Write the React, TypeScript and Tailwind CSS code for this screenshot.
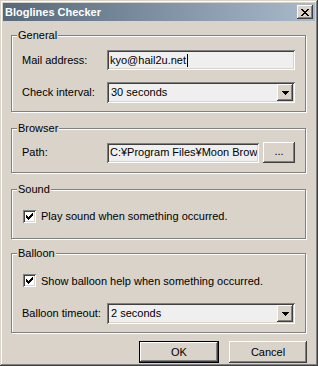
import React from 'react';

const SUNKEN =
  'shadow-[inset_1px_1px_0_#808080,inset_-1px_-1px_0_#ffffff,inset_2px_2px_0_#404040,inset_-2px_-2px_0_#d9d3ca]';
const RAISED =
  'shadow-[inset_-1px_-1px_0_#404040,inset_1px_1px_0_#ffffff,inset_-2px_-2px_0_#808080,inset_2px_2px_0_#d9d3ca]';

function Group({ title, className, children }: { title: string; className: string; children: React.ReactNode }) {
  return (
    <div
      className={`relative w-[295px] border border-[#808080] shadow-[1px_1px_0_#ffffff,inset_1px_1px_0_#ffffff] ${className}`}
    >
      <span className="absolute -top-[8px] left-[5px] bg-[#d9d3ca] px-[1px] leading-[14px]">{title}</span>
      {children}
    </div>
  );
}

function Arrow() {
  return (
    <svg width="7" height="4" viewBox="0 0 7 4" shapeRendering="crispEdges">
      <rect x="0" y="0" width="7" height="1" fill="#000" />
      <rect x="1" y="1" width="5" height="1" fill="#000" />
      <rect x="2" y="2" width="3" height="1" fill="#000" />
      <rect x="3" y="3" width="1" height="1" fill="#000" />
    </svg>
  );
}

function Select({ value }: { value: string }) {
  return (
    <div className={`flex h-[21px] w-[188px] items-stretch bg-[#efefef] p-[2px] ${SUNKEN}`}>
      <span className="flex flex-1 items-center pl-[2px]">{value}</span>
      <span className={`flex w-[16px] items-center justify-center bg-[#d9d3ca] ${RAISED}`}>
        <Arrow />
      </span>
    </div>
  );
}

function Check({ label }: { label: string }) {
  return (
    <div className="flex items-center gap-[5px] pl-[11px]">
      <span className={`flex h-[13px] w-[13px] items-center justify-center bg-white ${SUNKEN}`}>
        <svg width="7" height="7" viewBox="0 0 7 7" shapeRendering="crispEdges">
          <rect x="6" y="0" width="1" height="1" />
          <rect x="5" y="1" width="2" height="1" />
          <rect x="0" y="2" width="1" height="1" />
          <rect x="4" y="2" width="3" height="1" />
          <rect x="0" y="3" width="2" height="1" />
          <rect x="3" y="3" width="3" height="1" />
          <rect x="0" y="4" width="5" height="1" />
          <rect x="1" y="5" width="3" height="1" />
          <rect x="2" y="6" width="1" height="1" />
        </svg>
      </span>
      <span>{label}</span>
    </div>
  );
}

export default function App() {
  return (
    <div className="h-[366px] w-[318px] bg-[#d9d3ca] font-['Liberation_Sans',Arial,sans-serif] text-[11px] text-black shadow-[inset_-1px_-1px_0_#404040,inset_1px_1px_0_#d9d3ca,inset_-2px_-2px_0_#808080,inset_2px_2px_0_#ffffff] pt-[3px]">
      <div className="mx-[3px] flex h-[18px] items-center justify-between bg-gradient-to-r from-[#56697b] to-[#a9bacb] pl-[2px] pr-[2px]">
        <span className="font-bold text-white">Bloglines Checker</span>
        <span className={`flex h-[14px] w-[16px] items-center justify-center bg-[#d9d3ca] ${RAISED}`}>
          <svg width="8" height="7" viewBox="0 0 8 7" shapeRendering="crispEdges">
            <rect x="0" y="0" width="2" height="1" />
            <rect x="6" y="0" width="2" height="1" />
            <rect x="1" y="1" width="2" height="1" />
            <rect x="5" y="1" width="2" height="1" />
            <rect x="2" y="2" width="4" height="1" />
            <rect x="3" y="3" width="2" height="1" />
            <rect x="2" y="4" width="4" height="1" />
            <rect x="1" y="5" width="2" height="1" />
            <rect x="5" y="5" width="2" height="1" />
            <rect x="0" y="6" width="2" height="1" />
            <rect x="6" y="6" width="2" height="1" />
          </svg>
        </span>
      </div>

      <div className="flex flex-col pl-[11px] pt-[14px]">
        <Group title="General" className="pt-[14px] pb-[8px]">
          <div className="flex items-center pl-[10px]">
            <span className="w-[85px]">Mail address:</span>
            <div className={`flex h-[20px] w-[188px] items-center bg-[#efefef] pl-[3px] ${SUNKEN}`}>
              <span>kyo@hail2u.net</span>
              <span className="ml-[1px] h-[13px] w-[1px] bg-black" />
            </div>
          </div>
          <div className="mt-[12px] flex items-center pl-[10px]">
            <span className="w-[85px]">Check interval:</span>
            <Select value="30 seconds" />
          </div>
        </Group>

        <Group title="Browser" className="mt-[16px] pt-[13px] pb-[9px]">
          <div className="flex items-center pl-[10px]">
            <span className="w-[85px]">Path:</span>
            <div className={`flex h-[20px] w-[152px] items-center bg-[#efefef] py-[2px] pl-[3px] pr-[2px] ${SUNKEN}`}>
              <span className="block min-w-0 flex-1 overflow-hidden whitespace-nowrap">C:¥Program Files¥Moon Browser</span>
            </div>
            <span className={`ml-[4px] flex h-[21px] w-[32px] items-center justify-center bg-[#d9d3ca] pb-[2px] ${RAISED}`}>
              ...
            </span>
          </div>
        </Group>

        <Group title="Sound" className="mt-[16px] pt-[18px] pb-[13px]">
          <Check label="Play sound when something occurred." />
        </Group>

        <Group title="Balloon" className="mt-[14px] pt-[19px] pb-[8px]">
          <Check label="Show balloon help when something occurred." />
          <div className="mt-[14px] flex items-center pl-[10px]">
            <span className="w-[85px]">Balloon timeout:</span>
            <Select value="2 seconds" />
          </div>
        </Group>
      </div>

      <div className="mt-[8px] flex justify-end gap-[10px] pr-[11px]">
        <span className="flex h-[22px] w-[80px] border border-black">
          <span className={`flex flex-1 items-center justify-center bg-[#d9d3ca] ${RAISED}`}>OK</span>
        </span>
        <span className={`flex h-[22px] w-[78px] items-center justify-center bg-[#d9d3ca] ${RAISED}`}>Cancel</span>
      </div>
    </div>
  );
}
